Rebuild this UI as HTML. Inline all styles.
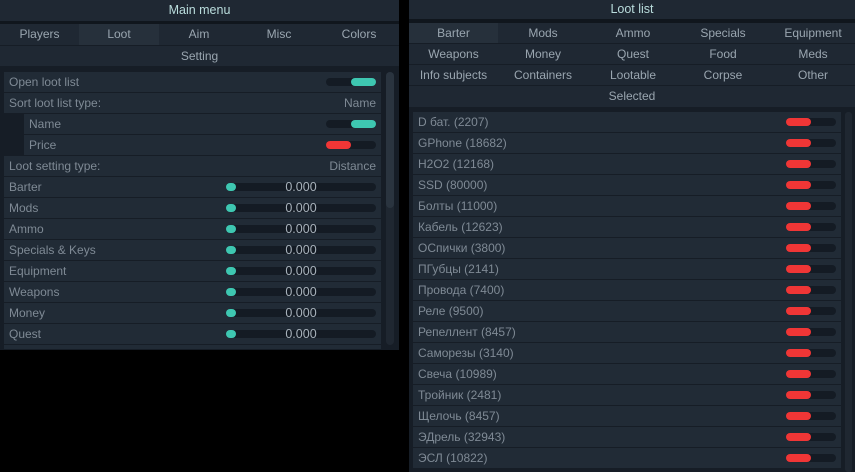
<!DOCTYPE html>
<html><head><meta charset="utf-8"><style>
*{margin:0;padding:0;box-sizing:border-box}
body{width:855px;height:472px;background:#000;position:relative;overflow:hidden;font-family:"Liberation Sans","DejaVu Sans",sans-serif;font-size:12px;color:#8b96a1}
.a{position:absolute}
.bar{position:absolute;background:#1f2833;color:#9aa6b0;text-align:center;line-height:20px}
.title{color:#b9dcdc;font-size:12.5px}
.row{position:absolute;background:#212b36;line-height:20px;padding-left:5px;color:#7f8a95;font-size:12px}
.tr{position:absolute;height:8px;border-radius:4px;background:#141b24}
.on{position:absolute;height:8px;width:25px;border-radius:4px;background:#3ec7b1}
.off{position:absolute;height:8px;width:25px;border-radius:4px;background:#f03636}
.kn{position:absolute;width:10px;height:8px;border-radius:4px;background:#3ec7b1}
.val{position:absolute;width:150px;text-align:center;color:#a8b2bb;font-size:12.5px}
.rt{position:absolute;right:5px;color:#7f8a95}
</style></head><body>
<!-- LEFT PANEL -->
<div class="a" style="left:0;top:0;width:399px;height:350px;background:#161d26"></div>
<div class="bar title" style="left:0;top:0;width:399px;height:21px">Main menu</div>
<div class="a" style="left:0;top:21px;width:399px;height:3px;background:#10161d"></div>
<div class="bar" style="left:0;top:24px;width:399px;height:21px"></div>
<div class="bar" style="left:0;top:24px;width:79px;height:21px">Players</div>
<div class="bar" style="left:79px;top:24px;width:80px;height:21px;background:#26303b">Loot</div>
<div class="bar" style="left:159px;top:24px;width:80px;height:21px">Aim</div>
<div class="bar" style="left:239px;top:24px;width:80px;height:21px">Misc</div>
<div class="bar" style="left:319px;top:24px;width:80px;height:21px">Colors</div>
<div class="bar" style="left:0;top:46px;width:399px;height:20px">Setting</div>
<div class="a" style="left:386px;top:72px;width:8px;height:273px;border-radius:4px;background:#1f2731"></div>
<div class="a" style="left:386px;top:72px;width:8px;height:136px;border-radius:4px;background:#2a343f"></div>

<div class="row" style="left:4px;top:72px;width:377px;height:20px">Open loot list<div class="tr" style="left:322px;top:6px;width:50px"></div><div class="on" style="left:347px;top:6px"></div></div>
<div class="row" style="left:4px;top:93px;width:377px;height:20px">Sort loot list type:<span class="rt">Name</span></div>
<div class="row" style="left:24px;top:114px;width:357px;height:20px">Name<div class="tr" style="left:302px;top:6px;width:50px"></div><div class="on" style="left:327px;top:6px"></div></div>
<div class="row" style="left:24px;top:135px;width:357px;height:20px">Price<div class="tr" style="left:302px;top:6px;width:50px"></div><div class="off" style="left:302px;top:6px"></div></div>
<div class="row" style="left:4px;top:156px;width:377px;height:20px">Loot setting type:<span class="rt">Distance</span></div>

<div class="row" style="left:4px;top:177px;width:377px;height:20px">Barter<div class="tr" style="left:222px;top:6px;width:150px"></div><div class="kn" style="left:222px;top:6px"></div><div class="val" style="left:222px;top:0">0.000</div></div>
<div class="row" style="left:4px;top:198px;width:377px;height:20px">Mods<div class="tr" style="left:222px;top:6px;width:150px"></div><div class="kn" style="left:222px;top:6px"></div><div class="val" style="left:222px;top:0">0.000</div></div>
<div class="row" style="left:4px;top:219px;width:377px;height:20px">Ammo<div class="tr" style="left:222px;top:6px;width:150px"></div><div class="kn" style="left:222px;top:6px"></div><div class="val" style="left:222px;top:0">0.000</div></div>
<div class="row" style="left:4px;top:240px;width:377px;height:20px">Specials &amp; Keys<div class="tr" style="left:222px;top:6px;width:150px"></div><div class="kn" style="left:222px;top:6px"></div><div class="val" style="left:222px;top:0">0.000</div></div>
<div class="row" style="left:4px;top:261px;width:377px;height:20px">Equipment<div class="tr" style="left:222px;top:6px;width:150px"></div><div class="kn" style="left:222px;top:6px"></div><div class="val" style="left:222px;top:0">0.000</div></div>
<div class="row" style="left:4px;top:282px;width:377px;height:20px">Weapons<div class="tr" style="left:222px;top:6px;width:150px"></div><div class="kn" style="left:222px;top:6px"></div><div class="val" style="left:222px;top:0">0.000</div></div>
<div class="row" style="left:4px;top:303px;width:377px;height:20px">Money<div class="tr" style="left:222px;top:6px;width:150px"></div><div class="kn" style="left:222px;top:6px"></div><div class="val" style="left:222px;top:0">0.000</div></div>
<div class="row" style="left:4px;top:324px;width:377px;height:20px">Quest<div class="tr" style="left:222px;top:6px;width:150px"></div><div class="kn" style="left:222px;top:6px"></div><div class="val" style="left:222px;top:0">0.000</div></div>
<div class="row" style="left:4px;top:345px;width:377px;height:4px"></div>

<!-- RIGHT PANEL -->
<div class="a" style="left:409px;top:0;width:446px;height:472px;background:#161d26"></div>
<div class="bar title" style="left:409px;top:0;width:446px;height:19px;line-height:18px">Loot list</div>
<div class="a" style="left:409px;top:19px;width:446px;height:4px;background:#10161d"></div>
<div class="bar" style="left:409px;top:23px;width:446px;height:84px"></div>
<div class="a" style="left:409px;top:23px;width:446px;height:84px;color:#9aa6b0;text-align:center">
<div class="a" style="left:0;top:0;width:89px;height:20px;line-height:20px;background:#26303b">Barter</div>
<div class="a" style="left:89px;top:0;width:90px;line-height:20px">Mods</div>
<div class="a" style="left:179px;top:0;width:90px;line-height:20px">Ammo</div>
<div class="a" style="left:269px;top:0;width:90px;line-height:20px">Specials</div>
<div class="a" style="left:359px;top:0;width:90px;line-height:20px">Equipment</div>
<div class="a" style="left:0;top:21px;width:89px;line-height:20px">Weapons</div>
<div class="a" style="left:89px;top:21px;width:90px;line-height:20px">Money</div>
<div class="a" style="left:179px;top:21px;width:90px;line-height:20px">Quest</div>
<div class="a" style="left:269px;top:21px;width:90px;line-height:20px">Food</div>
<div class="a" style="left:359px;top:21px;width:90px;line-height:20px">Meds</div>
<div class="a" style="left:0;top:42px;width:89px;line-height:20px">Info subjects</div>
<div class="a" style="left:89px;top:42px;width:90px;line-height:20px">Containers</div>
<div class="a" style="left:179px;top:42px;width:90px;line-height:20px">Lootable</div>
<div class="a" style="left:269px;top:42px;width:90px;line-height:20px">Corpse</div>
<div class="a" style="left:359px;top:42px;width:90px;line-height:20px">Other</div>
<div class="a" style="left:0;top:63px;width:446px;line-height:20px">Selected</div>
<div class="a" style="left:0;top:20px;width:446px;height:1px;background:#161d26"></div>
<div class="a" style="left:0;top:41px;width:446px;height:1px;background:#161d26"></div>
<div class="a" style="left:0;top:62px;width:446px;height:1px;background:#161d26"></div>
</div>
<div class="a" style="left:845px;top:112px;width:7px;height:360px;border-radius:3px;background:#1f2731"></div>

<div class="row" style="left:413px;top:112px;width:428px;height:20px">D бат. (2207)<div class="tr" style="left:373px;top:6px;width:50px"></div><div class="off" style="left:373px;top:6px"></div></div>
<div class="row" style="left:413px;top:133px;width:428px;height:20px">GPhone (18682)<div class="tr" style="left:373px;top:6px;width:50px"></div><div class="off" style="left:373px;top:6px"></div></div>
<div class="row" style="left:413px;top:154px;width:428px;height:20px">H2O2 (12168)<div class="tr" style="left:373px;top:6px;width:50px"></div><div class="off" style="left:373px;top:6px"></div></div>
<div class="row" style="left:413px;top:175px;width:428px;height:20px">SSD (80000)<div class="tr" style="left:373px;top:6px;width:50px"></div><div class="off" style="left:373px;top:6px"></div></div>
<div class="row" style="left:413px;top:196px;width:428px;height:20px">Болты (11000)<div class="tr" style="left:373px;top:6px;width:50px"></div><div class="off" style="left:373px;top:6px"></div></div>
<div class="row" style="left:413px;top:217px;width:428px;height:20px">Кабель (12623)<div class="tr" style="left:373px;top:6px;width:50px"></div><div class="off" style="left:373px;top:6px"></div></div>
<div class="row" style="left:413px;top:238px;width:428px;height:20px">ОСпички (3800)<div class="tr" style="left:373px;top:6px;width:50px"></div><div class="off" style="left:373px;top:6px"></div></div>
<div class="row" style="left:413px;top:259px;width:428px;height:20px">ПГубцы (2141)<div class="tr" style="left:373px;top:6px;width:50px"></div><div class="off" style="left:373px;top:6px"></div></div>
<div class="row" style="left:413px;top:280px;width:428px;height:20px">Провода (7400)<div class="tr" style="left:373px;top:6px;width:50px"></div><div class="off" style="left:373px;top:6px"></div></div>
<div class="row" style="left:413px;top:301px;width:428px;height:20px">Реле (9500)<div class="tr" style="left:373px;top:6px;width:50px"></div><div class="off" style="left:373px;top:6px"></div></div>
<div class="row" style="left:413px;top:322px;width:428px;height:20px">Репеллент (8457)<div class="tr" style="left:373px;top:6px;width:50px"></div><div class="off" style="left:373px;top:6px"></div></div>
<div class="row" style="left:413px;top:343px;width:428px;height:20px">Саморезы (3140)<div class="tr" style="left:373px;top:6px;width:50px"></div><div class="off" style="left:373px;top:6px"></div></div>
<div class="row" style="left:413px;top:364px;width:428px;height:20px">Свеча (10989)<div class="tr" style="left:373px;top:6px;width:50px"></div><div class="off" style="left:373px;top:6px"></div></div>
<div class="row" style="left:413px;top:385px;width:428px;height:20px">Тройник (2481)<div class="tr" style="left:373px;top:6px;width:50px"></div><div class="off" style="left:373px;top:6px"></div></div>
<div class="row" style="left:413px;top:406px;width:428px;height:20px">Щелочь (8457)<div class="tr" style="left:373px;top:6px;width:50px"></div><div class="off" style="left:373px;top:6px"></div></div>
<div class="row" style="left:413px;top:427px;width:428px;height:20px">ЭДрель (32943)<div class="tr" style="left:373px;top:6px;width:50px"></div><div class="off" style="left:373px;top:6px"></div></div>
<div class="row" style="left:413px;top:448px;width:428px;height:20px">ЭСЛ (10822)<div class="tr" style="left:373px;top:6px;width:50px"></div><div class="off" style="left:373px;top:6px"></div></div>
</body></html>
